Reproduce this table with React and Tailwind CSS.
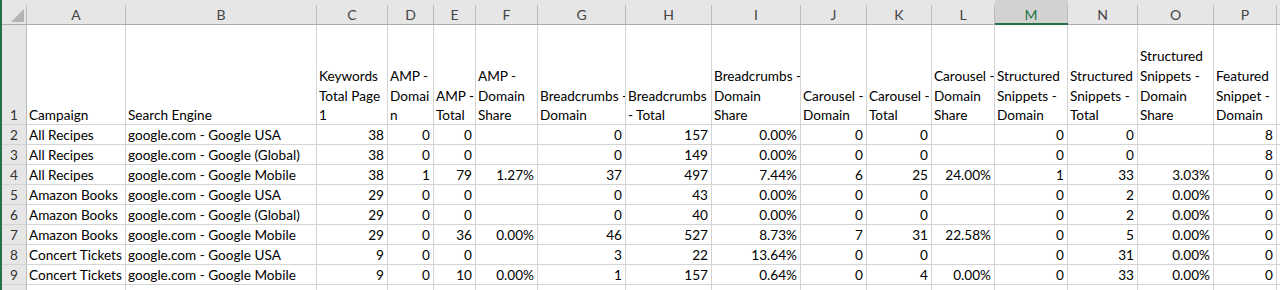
const columns = ['A', 'B', 'C', 'D', 'E', 'F', 'G', 'H', 'I', 'J', 'K', 'L', 'M', 'N', 'O', 'P']

// wrapped exactly as the sheet shows them
const headings = [
  ['Campaign'],
  ['Search Engine'],
  ['Keywords', 'Total Page', '1'],
  ['AMP -', 'Domai', 'n'],
  ['AMP -', 'Total'],
  ['AMP -', 'Domain', 'Share'],
  ['Breadcrumbs -', 'Domain'],
  ['Breadcrumbs', '- Total'],
  ['Breadcrumbs -', 'Domain', 'Share'],
  ['Carousel -', 'Domain'],
  ['Carousel -', 'Total'],
  ['Carousel -', 'Domain', 'Share'],
  ['Structured', 'Snippets -', 'Domain'],
  ['Structured', 'Snippets -', 'Total'],
  ['Structured', 'Snippets -', 'Domain', 'Share'],
  ['Featured', 'Snippet -', 'Domain'],
]

const rows = [
  ['All Recipes', 'google.com - Google USA', 38, 0, 0, '', 0, 157, '0.00%', 0, 0, '', 0, 0, '', 8],
  ['All Recipes', 'google.com - Google (Global)', 38, 0, 0, '', 0, 149, '0.00%', 0, 0, '', 0, 0, '', 8],
  ['All Recipes', 'google.com - Google Mobile', 38, 1, 79, '1.27%', 37, 497, '7.44%', 6, 25, '24.00%', 1, 33, '3.03%', 0],
  ['Amazon Books', 'google.com - Google USA', 29, 0, 0, '', 0, 43, '0.00%', 0, 0, '', 0, 2, '0.00%', 0],
  ['Amazon Books', 'google.com - Google (Global)', 29, 0, 0, '', 0, 40, '0.00%', 0, 0, '', 0, 2, '0.00%', 0],
  ['Amazon Books', 'google.com - Google Mobile', 29, 0, 36, '0.00%', 46, 527, '8.73%', 7, 31, '22.58%', 0, 5, '0.00%', 0],
  ['Concert Tickets', 'google.com - Google USA', 9, 0, 0, '', 3, 22, '13.64%', 0, 0, '', 0, 31, '0.00%', 0],
  ['Concert Tickets', 'google.com - Google Mobile', 9, 0, 10, '0.00%', 1, 157, '0.64%', 0, 4, '0.00%', 0, 33, '0.00%', 0],
]

const gridCols = 'grid grid-cols-[25px_99px_191px_71px_46px_42px_62px_88px_86px_89px_66px_65px_63px_73px_70px_76px_63px_1fr]'

function Corner() {
  return (
    <div className="h-[25px] bg-[#e6e6e6] border-b border-[#ababab]">
      <div className="mt-[5px] h-[19px] border-r border-[#bcbcbc] flex items-end justify-end pr-[2px] pb-[2px]">
        <svg width="13" height="13" viewBox="0 0 13 13">
          <polygon points="13,0 13,13 0,13" fill="#b4b4b4" />
        </svg>
      </div>
    </div>
  )
}

function ColumnHeader({ letter }) {
  const selected = letter === 'M'
  return (
    <div className={`h-[25px] ${selected ? 'bg-[#d2d2d2] border-b-2 border-[#217346]' : 'bg-[#e6e6e6] border-b border-[#ababab]'}`}>
      <div className={`mt-[5px] ${selected ? 'h-[18px]' : 'h-[19px]'} border-r border-[#bcbcbc] flex items-center justify-center text-[14px] ${selected ? 'text-[#217346]' : 'text-[#444]'}`}>
        {letter}
      </div>
    </div>
  )
}

function RowHeader({ n, tall }) {
  return (
    <div className={`${tall ? 'h-[100px]' : 'h-[20px]'} bg-[#e6e6e6] border-r border-b border-r-[#bcbcbc] border-b-[#d4d4d4] flex items-end justify-center leading-[18px] text-[#333]`}>
      {n}
    </div>
  )
}

function Cell({ value, tall }) {
  const numeric = value !== '' && !/^[A-Za-z]/.test(String(value))
  return (
    <div className={`${tall ? 'h-[100px]' : 'h-[20px]'} border-r border-b border-[#d4d4d4] flex items-end leading-[18px] whitespace-nowrap overflow-hidden ${numeric ? 'justify-end pr-[3px]' : 'pl-[2px]'}`}>
      {value}
    </div>
  )
}

function Row({ n, values }) {
  return (
    <>
      <RowHeader n={n} />
      {values.map((v, j) => <Cell key={j} value={v} />)}
      <div className="h-[20px] border-b border-[#d4d4d4]" />
    </>
  )
}

export default function App() {
  return (
    <div className="w-[1280px] h-[290px] overflow-hidden bg-white border-l-2 border-[#217346] text-black text-[13.6px] font-['Lato','Liberation_Sans',sans-serif]">
      <div className={gridCols}>
        <Corner />
        {columns.map(c => <ColumnHeader key={c} letter={c} />)}
        <div className="h-[25px] bg-[#e6e6e6] border-b border-[#ababab]" />

        <RowHeader n={1} tall />
        {headings.map((lines, i) => (
          <div key={i} className="h-[100px] border-r border-b border-[#d4d4d4] flex flex-col justify-end pl-[2px] leading-[20px] overflow-hidden whitespace-nowrap">
            {lines.map((l, j) => <span key={j} className="last:leading-[18px]">{l}</span>)}
          </div>
        ))}
        <div className="h-[100px] border-b border-[#d4d4d4]" />

        {rows.map((r, i) => (
          <Row key={i} n={i + 2} values={r} />
        ))}

        {/* next row, only its top edge is in view */}
        <RowHeader />
        {columns.map(c => <Cell key={c} value="" />)}
        <div />
      </div>
    </div>
  )
}
